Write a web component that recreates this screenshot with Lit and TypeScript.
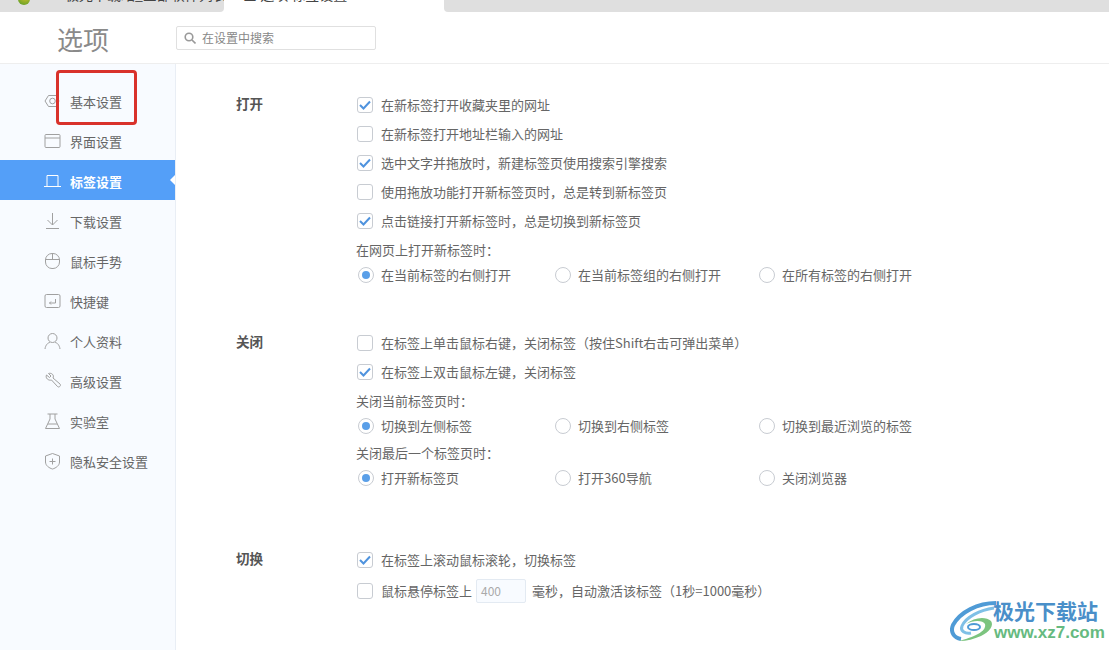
import { LitElement, html, css, svg } from "lit";
import { customElement } from "lit/decorators.js";

const ICON: Record<string, unknown> = {
  gear: svg`<path d="M1.500 9 5 3.500h7.500L15.500 9 12.500 14.500H5Z"/><circle cx="9" cy="9" r="2.800"/>`,
  win: svg`<rect x="1.500" y="2.500" width="15" height="13" rx="1"/><path d="M1.500 6h15"/>`,
  tab: svg`<path d="M3.500 14V3.500h11V14M.5 14.500h17"/>`,
  down: svg`<path d="M9 1v12M4 8l5 5 5-5M2.500 16.500h13"/>`,
  mouse: svg`<rect x="2" y="1.500" width="14" height="15" rx="6.500"/><path d="M2 7.500h14M9 1.500v6"/>`,
  key: svg`<rect x="1.500" y="2.500" width="15" height="13" rx="1.500"/><path d="M12 7v4H6M7.500 9.500 6 11l1.500 1.500"/>`,
  user: svg`<circle cx="9" cy="6" r="4.500"/><path d="M1.500 17c.5-4 3-6.500 5-6.500M16.500 17c-.5-4-3-6.500-5-6.500"/>`,
  wrench: svg`<path d="M3 3l3 2.500L7.500 4 5 1.500c3-1 6 1.500 4.500 4.500l7 6c1.500 1.500-1 4-2.500 2.500L8 8C5 9 1.500 6 3 3Z"/>`,
  lab: svg`<path d="M4 2h10M6.500 2v5L2 16.500h14L11.500 7V2M4.500 12h9"/>`,
  shield: svg`<path d="M9 1.500 16 4v6c0 3.500-3.500 6-7 7-3.500-1-7-3.500-7-7V4Z"/><path d="M9 6.500v6M6 9.500h6"/>`,
};

const NAV: [string, string][] = [
  ["gear", "基本设置"], ["win", "界面设置"], ["tab", "标签设置"], ["down", "下载设置"], ["mouse", "鼠标手势"],
  ["key", "快捷键"], ["user", "个人资料"], ["wrench", "高级设置"], ["lab", "实验室"], ["shield", "隐私安全设置"],
];

@customElement("app-root")
export class AppRoot extends LitElement {
  static styles = css`
    :host { display: block; width: 1109px; height: 650px; overflow: hidden; position: relative; background: #fff;
      font-family: "Noto Sans CJK SC", "Liberation Sans", sans-serif; font-size: 13px; color: #666; }
    .strip { display: flex; height: 12px; overflow: hidden; background: #fff; }
    .t { background: #dfdfdf; height: 12px; overflow: hidden; box-sizing: border-box; color: #444; white-space: nowrap; font-size: 14px; line-height: 14px; }
    .t span { display: block; margin-top: -13px; }
    .t1 { width: 224px; border-bottom-right-radius: 4px; padding-left: 65px; position: relative; }
    .t2 { width: 220px; background: #fff; padding-left: 19px; }
    .t3 { flex: 1; border-bottom-left-radius: 4px; padding-left: 12px; }
    .ball { position: absolute; left: 18px; top: -7px; width: 12px; height: 12px; border-radius: 50%; background: radial-gradient(circle at 60% 30%, #d7c22c, #4d9a26); }
    .head { height: 52px; box-sizing: border-box; display: flex; align-items: center; padding-left: 57px; border-bottom: 1px solid #eeeeee; }
    .title { width: 119px; font-size: 26px; line-height: 36px; color: #8a8a8a; margin-top: 3px; }
    .search { width: 200px; height: 24px; box-sizing: border-box; border: 1px solid #e0e0e0; border-radius: 2px; display: flex; align-items: center; gap: 6px; padding-left: 7px; font-size: 12px; color: #888; }
    .search svg { width: 12px; height: 12px; fill: none; stroke: #999; stroke-width: 1.600; }
    .body { display: flex; height: 586px; }
    .side { width: 176px; box-sizing: border-box; background: #f8fbff; border-right: 1px solid #e9eef5; padding-top: 16px; flex: none; }
    .item { height: 40px; box-sizing: border-box; padding-top: 2px; display: flex; align-items: center; padding-left: 43px; gap: 8px; color: #666; position: relative; }
    .item svg { width: 19px; height: 18px; fill: none; stroke: #a0a0a0; stroke-width: 1; flex: none; }
    .item.on { background: #549ff8; color: #fff; font-weight: 700; }
    .item.on svg { stroke: #fff; }
    .item.on::after { content: ""; position: absolute; right: 0; top: 15px; border: 5px solid transparent; border-right-color: #fff; border-left-width: 0; }
    .main { flex: 1; padding: 26px 0 0 60px; }
    section { display: flex; margin-bottom: 43px; }
    section.last { margin-top: 57px; }
    .name { width: 121px; flex: none; font-weight: 700; font-size: 13.500px; color: #555; line-height: 27px; }
    .rows { flex: 1; }
    .row { height: 29px; display: flex; align-items: center; gap: 8px; white-space: nowrap; }
    .row.tall { height: 33px; }
    .cap { height: 29px; display: flex; align-items: center; margin-left: -1px; }
    .cap.next { margin-top: 2px; }
    .radios { height: 21px; display: grid; grid-template-columns: 197px 204px 1fr; align-items: center; }
    .radio { display: flex; align-items: center; gap: 7px; white-space: nowrap; padding-left: 1px; }
    .box { width: 16px; height: 16px; box-sizing: border-box; border: 1px solid #c8ccd2; border-radius: 3px; flex: none; display: flex; align-items: center; justify-content: center; background: #fff; }
    .box svg { width: 12px; height: 10px; fill: none; stroke: #4f93de; stroke-width: 2; }
    .dot { width: 16px; height: 16px; box-sizing: border-box; border: 1px solid #c8ccd2; border-radius: 50%; flex: none; display: flex; align-items: center; justify-content: center; }
    .dot.on::after { content: ""; width: 8px; height: 8px; border-radius: 50%; background: #5a9fe8; }
    .num { width: 50px; height: 24px; box-sizing: border-box; border: 1px solid #e3eaf2; border-radius: 2px; background: #f8fbff; color: #aaa; font-size: 12px; padding-left: 4px; display: flex; align-items: center; margin: 0 -2px 0 -4px; }
    .red { position: absolute; left: 56px; top: 70px; width: 81px; height: 55px; box-sizing: border-box; border: 3px solid #d9322b; border-radius: 4px; }
    .wm { position: absolute; left: 950px; top: 598px; width: 159px; height: 48px; }
    .wm svg { position: absolute; left: 0; top: 2px; width: 58px; height: 44px; }
    .wm b { position: absolute; left: 43px; top: 0; font-size: 21px; line-height: 24px; color: #4a8fc9; white-space: nowrap; }
    .wm i { position: absolute; left: 44px; top: 26px; font: 700 17px/18px "Liberation Sans", sans-serif; color: #66ba80; white-space: nowrap; }
  `;

  private check(on: boolean, text: unknown, tall = false) {
    return html`<div class="row ${tall ? "tall" : ""}"><span class="box">${on ? html`<svg viewBox="0 0 12 10"><path d="M1 5l3.500 3.500L11 1.500"/></svg>` : ""}</span>${text}</div>`;
  }

  private radios(items: string[]) {
    return html`<div class="radios">${items.map((t, i) => html`<div class="radio"><span class="dot ${i === 0 ? "on" : ""}"></span>${t}</div>`)}</div>`;
  }

  render() {
    return html`
      <div class="strip">
        <div class="t t1"><i class="ball"></i><span>极光下载站_全部软件列表</span></div>
        <div class="t t2"><span>■ 选项 标签设置</span></div>
        <div class="t t3"><span>+</span></div>
      </div>
      <div class="head">
        <div class="title">选项</div>
        <div class="search"><svg viewBox="0 0 12 12"><circle cx="5" cy="5" r="3.800"/><path d="M8 8l3.500 3.500"/></svg>在设置中搜索</div>
      </div>
      <div class="body">
        <nav class="side">
          ${NAV.map(([ic, t]) => html`<div class="item ${t === "标签设置" ? "on" : ""}"><svg viewBox="0 0 18 18">${ICON[ic]}</svg>${t}</div>`)}
        </nav>
        <div class="main">
          <section>
            <div class="name">打开</div>
            <div class="rows">
              ${this.check(true, "在新标签打开收藏夹里的网址")}
              ${this.check(false, "在新标签打开地址栏输入的网址")}
              ${this.check(true, "选中文字并拖放时，新建标签页使用搜索引擎搜索")}
              ${this.check(false, "使用拖放功能打开新标签页时，总是转到新标签页")}
              ${this.check(true, "点击链接打开新标签时，总是切换到新标签页")}
              <div class="cap">在网页上打开新标签时：</div>
              ${this.radios(["在当前标签的右侧打开", "在当前标签组的右侧打开", "在所有标签的右侧打开"])}
            </div>
          </section>
          <section>
            <div class="name">关闭</div>
            <div class="rows">
              ${this.check(false, "在标签上单击鼠标右键，关闭标签（按住Shift右击可弹出菜单）")}
              ${this.check(true, "在标签上双击鼠标左键，关闭标签")}
              <div class="cap">关闭当前标签页时：</div>
              ${this.radios(["切换到左侧标签", "切换到右侧标签", "切换到最近浏览的标签"])}
              <div class="cap next">关闭最后一个标签页时：</div>
              ${this.radios(["打开新标签页", "打开360导航", "关闭浏览器"])}
            </div>
          </section>
          <section class="last">
            <div class="name">切换</div>
            <div class="rows">
              ${this.check(true, "在标签上滚动鼠标滚轮，切换标签")}
              ${this.check(false, html`鼠标悬停标签上<span class="num">400</span>毫秒，自动激活该标签（1秒=1000毫秒）`, true)}
            </div>
          </section>
        </div>
      </div>
      <div class="red"></div>
      <div class="wm">
        <svg viewBox="0 0 58 44" fill="none">
          <path d="M46 3C28 3 10 12 3 25c-3 7 1 13 8 14" stroke="#4f9bd6" stroke-width="4"/>
          <path d="M44 8C30 10 16 17 12 26c-2 5 3 8 9 7" stroke="#7fc0e6" stroke-width="3"/>
          <path d="M16 24c8-7 20-8 25-3 3 4-1 11-10 15-7 3-14 5-22 5 14-4 28-9 26-17-2-4-12-4-19 0Z" fill="#7cc47f"/>
          <ellipse cx="24" cy="27" rx="6" ry="3" stroke="#4f9bd6" stroke-width="2"/>
        </svg>
        <b>极光下载站</b>
        <i>www.xz7.com</i>
      </div>
    `;
  }
}
